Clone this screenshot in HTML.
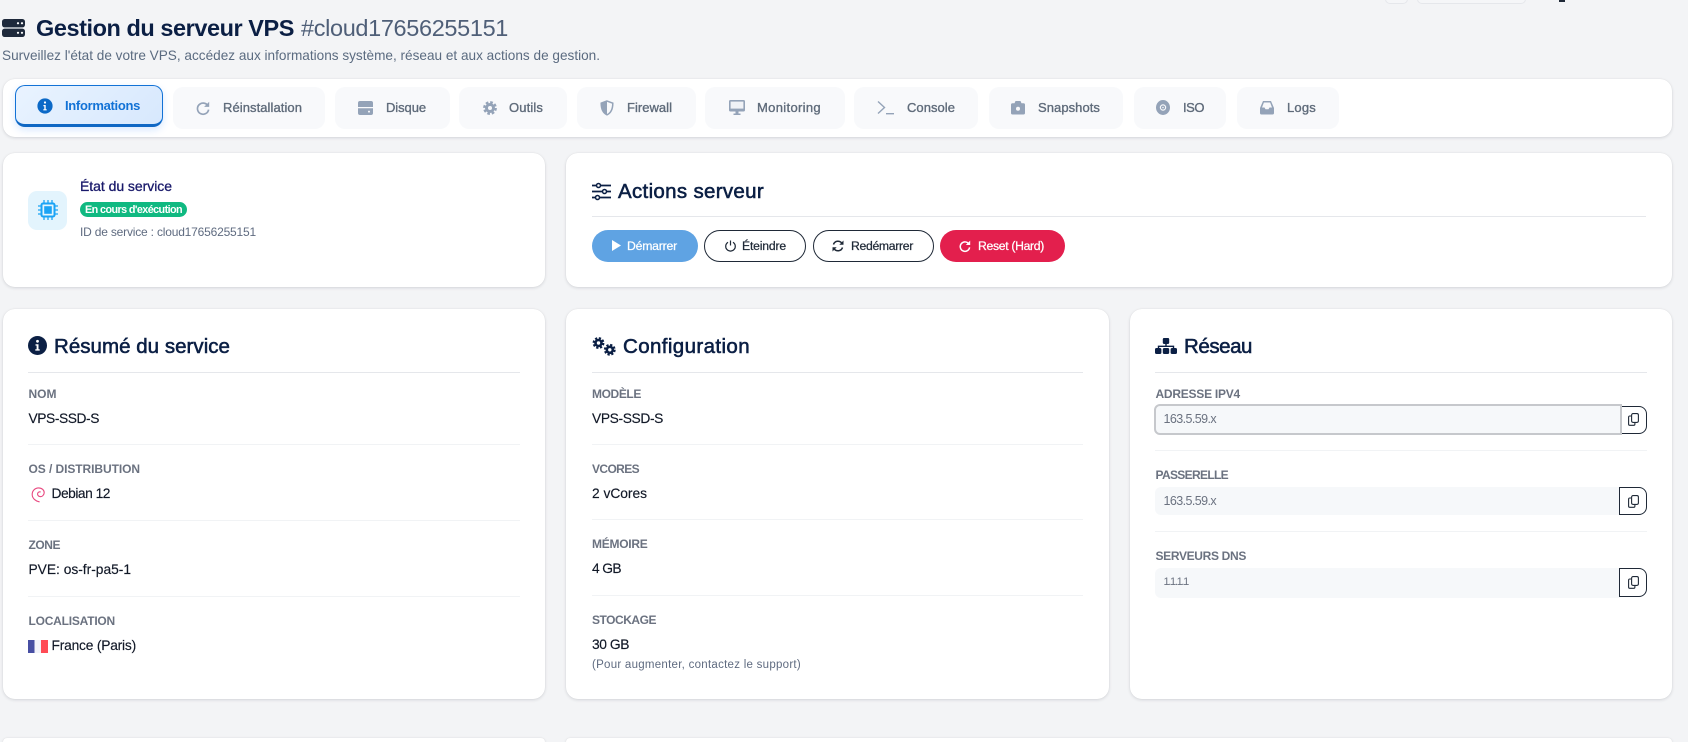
<!DOCTYPE html>
<html lang="fr">
<head>
<meta charset="utf-8">
<title>Gestion du serveur VPS</title>
<style>
html,body{margin:0;padding:0;width:1688px;height:742px;overflow:hidden;background:#f3f4f6}
body{position:relative;font-family:"Liberation Sans",Arial,sans-serif;color:#0f172a}
#w{position:absolute;left:0;top:0;width:1688px;height:742px;overflow:hidden;filter:blur(.3px)}
.c{position:absolute;background:#fff;border-radius:12px;box-shadow:0 1px 3px rgba(15,23,42,.13),0 0 1px rgba(15,23,42,.12)}
.t{position:absolute;white-space:nowrap;line-height:20px;height:20px}
.h1{font-size:23.5px;font-weight:700;color:#0b1f44}
.h2{font-size:20.5px;color:#0b1f44;-webkit-text-stroke:.55px #0b1f44}
.tab{position:absolute;top:87px;height:42px;background:#f8f9fb;border-radius:10px}
.tl{font-size:13px;color:#5f6b7a;-webkit-text-stroke:.35px #5f6b7a}
.lb{font-size:12px;font-weight:700;color:#6b7280}
.v{font-size:13.8px;color:#111827;-webkit-text-stroke:.15px #111827}
.hr{position:absolute;height:1px;background:#e5e7eb}
.hl{position:absolute;height:1px;background:#f1f3f5}
.btn{position:absolute;top:230px;height:32px;border-radius:16px;box-sizing:border-box}
.bo{border:1px solid #1f2937;background:#fff}
.bl{font-size:12.2px;-webkit-text-stroke:.25px currentColor}
svg{position:absolute;display:block;overflow:visible}
.inp{position:absolute;background:#f6f8fa;border-radius:6px 0 0 6px;box-sizing:border-box}
.cp{position:absolute;background:#fff;box-sizing:border-box;border:1px solid #1f2937;border-radius:0 8px 8px 0}
.ip{font-size:12.5px;color:#6b7280}
</style>
</head>
<body>
<div id="w">
<!-- top clipped controls -->
<div style="position:absolute;left:1385px;top:-10px;width:23px;height:14px;border:1px solid #e5e7eb;border-radius:5px;box-sizing:border-box;background:#f5f6f8"></div>
<div style="position:absolute;left:1417px;top:-10px;width:109px;height:14px;border:1px solid #e5e7eb;border-radius:5px;box-sizing:border-box;background:#f5f6f8"></div>
<div style="position:absolute;left:1559px;top:0;width:6px;height:2px;background:#1f2937"></div>

<!-- Header -->
<svg style="left:2px;top:19px" width="23" height="18" viewBox="0 0 23 18"><rect x="0" y="0" width="23" height="8.4" rx="2.6" fill="#1e293b"/><rect x="0" y="9.6" width="23" height="8.4" rx="2.6" fill="#1e293b"/><circle cx="16" cy="4.2" r="1.1" fill="#fff"/><circle cx="20" cy="4.2" r="1.1" fill="#fff"/><circle cx="16" cy="13.8" r="1.1" fill="#fff"/><circle cx="20" cy="13.8" r="1.1" fill="#fff"/></svg>
<div class="t h1" data-w="258" style="left:36px;top:18px">Gestion du serveur VPS</div>
<div class="t" data-w="207" style="left:301px;top:18px;font-size:23.5px;color:#4f5f78">#cloud17656255151</div>
<div class="t" data-w="598" style="left:2px;top:46px;font-size:13.6px;color:#5b6b80">Surveillez l'état de votre VPS, accédez aux informations système, réseau et aux actions de gestion.</div>

<!-- Tabs -->
<div class="c" style="left:3px;top:79px;width:1669px;height:58px"></div>
<div style="position:absolute;left:15px;top:85px;width:148px;height:42px;box-sizing:border-box;border:1px solid #1272d6;border-bottom:3px solid #0f67c4;border-radius:10px;background:linear-gradient(135deg,#e9f3ff,#d7e8fd);box-shadow:0 3px 8px rgba(13,110,253,.16)"></div>
<svg style="left:37px;top:98px" width="16" height="16" viewBox="0 0 16 16"><circle cx="8" cy="8" r="7.6" fill="#0b69c7"/><circle cx="8" cy="4.5" r="1.1" fill="#fff"/><path d="M6.4 7h2.3v4.2h1v1.2H6.3v-1.2h1V8.2h-.9z" fill="#fff"/></svg>
<div class="t" data-w="75" style="left:65px;top:96px;font-size:13px;color:#1272d6;font-weight:700">Informations</div>

<div class="tab" style="left:173px;width:152px"></div>
<svg style="left:196px;top:101px" width="14" height="14" viewBox="0 0 14 14"><path d="M12 5A5.6 5.6 0 1 0 12.6 8.6" fill="none" stroke="#94a3b8" stroke-width="1.7"/><path d="M13.2.8v5.1H8.1z" fill="#94a3b8"/></svg>
<div class="t tl" data-w="79" style="left:223px;top:98px">Réinstallation</div>

<div class="tab" style="left:335px;width:115px"></div>
<svg style="left:358px;top:101px" width="15" height="14" viewBox="0 0 15 14"><path d="M2 0h11a2 2 0 0 1 2 2v4H0V2a2 2 0 0 1 2-2z" fill="#94a3b8"/><path d="M0 7.2h15V12a2 2 0 0 1-2 2H2a2 2 0 0 1-2-2z" fill="#94a3b8"/><circle cx="11" cy="10.6" r="1" fill="#f8f9fb"/></svg>
<div class="t tl" data-w="40" style="left:386px;top:98px">Disque</div>

<div class="tab" style="left:459px;width:108px"></div>
<svg style="left:483px;top:101px" width="14" height="14" viewBox="0 0 14 14"><circle cx="7" cy="7" r="5.6" fill="none" stroke="#94a3b8" stroke-width="2.6" stroke-dasharray="2.6 1.8"/><circle cx="7" cy="7" r="5" fill="#94a3b8"/><circle cx="7" cy="7" r="2" fill="#f8f9fb"/></svg>
<div class="t tl" data-w="34" style="left:509px;top:98px">Outils</div>

<div class="tab" style="left:577px;width:119px"></div>
<svg style="left:600px;top:100px" width="14" height="16" viewBox="0 0 14 16"><path d="M7 1 1.2 3.2c0 5 1 9.300 5.800 11.600 4.800-2.300 5.800-6.600 5.800-11.600z" fill="none" stroke="#94a3b8" stroke-width="1.500"/><path d="M7 1 1.200 3.200c0 5 1 9.300 5.800 11.600z" fill="#94a3b8"/></svg>
<div class="t tl" data-w="45" style="left:627px;top:98px">Firewall</div>

<div class="tab" style="left:705px;width:140px"></div>
<svg style="left:729px;top:100px" width="16" height="15" viewBox="0 0 16 15"><path d="M1.500 0h13A1.500 1.500 0 0 1 16 1.500v8.500a1.500 1.500 0 0 1-1.500 1.500h-13A1.500 1.500 0 0 1 0 10V1.500A1.500 1.500 0 0 1 1.500 0z" fill="#94a3b8"/><rect x="1.600" y="1.600" width="12.800" height="7" fill="#f0f2f6"/><path d="M6.500 11.500h3v2h2v1.500h-7v-1.500h2z" fill="#94a3b8"/></svg>
<div class="t tl" data-w="64" style="left:757px;top:98px">Monitoring</div>

<div class="tab" style="left:854px;width:124px"></div>
<svg style="left:877px;top:100px" width="17" height="15" viewBox="0 0 17 15"><path d="M1 1.500 7.500 7.500 1 13.500" fill="none" stroke="#94a3b8" stroke-width="1.400"/><rect x="9" y="13" width="8" height="1.400" fill="#94a3b8"/></svg>
<div class="t tl" data-w="48" style="left:907px;top:98px">Console</div>

<div class="tab" style="left:989px;width:134px"></div>
<svg style="left:1011px;top:100px" width="14" height="15" viewBox="0 0 14 15"><path d="M4.500 1h5l1 2.300H12.500a1.500 1.500 0 0 1 1.500 1.500V13a1.500 1.500 0 0 1-1.500 1.500h-11A1.500 1.500 0 0 1 0 13V4.800a1.500 1.500 0 0 1 1.500-1.500H3.500z" fill="#94a3b8"/><circle cx="7" cy="8.800" r="2" fill="#f8f9fb"/></svg>
<div class="t tl" data-w="62" style="left:1038px;top:98px">Snapshots</div>

<div class="tab" style="left:1134px;width:92px"></div>
<svg style="left:1156px;top:100px" width="14" height="15" viewBox="0 0 14 15"><ellipse cx="7" cy="7.500" rx="7" ry="7.500" fill="#94a3b8"/><circle cx="7" cy="7.500" r="2.600" fill="none" stroke="#f8f9fb" stroke-width="1.200"/><circle cx="7" cy="7.500" r=".8" fill="#f8f9fb"/></svg>
<div class="t tl" data-w="21" style="left:1183px;top:98px">ISO</div>

<div class="tab" style="left:1237px;width:102px"></div>
<svg style="left:1260px;top:100px" width="14" height="15" viewBox="0 0 14 15"><path d="M3 1h8l3 7V13a1.500 1.500 0 0 1-1.500 1.500h-11A1.500 1.500 0 0 1 0 13V8z" fill="#94a3b8"/><path d="M3.900 2.500h6.200l1.900 5H9.500l-1 1.800h-3l-1-1.800H2z" fill="#f8f9fb"/></svg>
<div class="t tl" data-w="29" style="left:1287px;top:98px">Logs</div>

<!-- Service state -->
<div class="c" style="left:3px;top:153px;width:542px;height:134px"></div>
<div style="position:absolute;left:28px;top:191px;width:39px;height:39px;border-radius:9px;background:#e3f4fd"></div>
<svg style="left:38px;top:200px" width="20" height="20" viewBox="0 0 20 20"><rect x="3.500" y="3.500" width="13" height="13" rx="1.500" fill="none" stroke="#1aa3f5" stroke-width="2"/><rect x="6.200" y="6.200" width="7.600" height="7.600" fill="#1aa3f5"/><path d="M6 0v3M10 0v3M14 0v3M6 17v3M10 17v3M14 17v3M0 6h3M0 10h3M0 14h3M17 6h3M17 10h3M17 14h3" stroke="#1aa3f5" stroke-width="1.300"/></svg>
<div class="t" data-w="92" style="left:80px;top:176px;font-size:14px;color:#1a1a6b;-webkit-text-stroke:.3px #1a1a6b">État du service</div>
<div style="position:absolute;left:80px;top:202px;width:107px;height:15px;border-radius:8px;background:#10b981"></div>
<div class="t" data-w="97" style="left:85px;top:199.500px;font-size:10.800px;font-weight:700;color:#fff">En cours d'exécution</div>
<div class="t" data-w="176" style="left:80px;top:222px;font-size:12px;color:#5f6b80">ID de service : cloud17656255151</div>

<!-- Actions -->
<div class="c" style="left:566px;top:153px;width:1106px;height:134px"></div>
<svg style="left:592px;top:183px" width="19" height="17" viewBox="0 0 19 17"><path d="M0 2.500h19M0 8.500h19M0 14.500h19" stroke="#0b1f44" stroke-width="1.700"/><circle cx="6.500" cy="2.500" r="2" fill="#fff" stroke="#0b1f44" stroke-width="1.500"/><circle cx="12.500" cy="8.500" r="2" fill="#fff" stroke="#0b1f44" stroke-width="1.500"/><circle cx="5.500" cy="14.500" r="2" fill="#fff" stroke="#0b1f44" stroke-width="1.500"/></svg>
<div class="t h2" data-w="146" style="left:618px;top:182px">Actions serveur</div>
<div class="hr" style="left:592px;top:216px;width:1054px"></div>

<div class="btn" style="left:592px;width:106px;background:#5fa3e3"></div>
<svg style="left:612px;top:240px" width="9" height="11" viewBox="0 0 9 11"><path d="M0 0 9 5.500 0 11z" fill="#fff"/></svg>
<div class="t bl" data-w="50" style="left:627px;top:236px;color:#fff">Démarrer</div>

<div class="btn bo" style="left:704px;width:102px"></div>
<svg style="left:725px;top:240px" width="11" height="12" viewBox="0 0 11 12"><path d="M3 2.200a4.800 4.800 0 1 0 5 0" fill="none" stroke="#1f2937" stroke-width="1.200"/><path d="M5.500 .5v5" stroke="#1f2937" stroke-width="1.200"/></svg>
<div class="t bl" data-w="44" style="left:742px;top:236px;color:#1f2937">Éteindre</div>

<div class="btn bo" style="left:813px;width:121px"></div>
<svg style="left:832px;top:240px" width="12" height="12" viewBox="0 0 12 12"><path d="M1.500 4.500A4.700 4.700 0 0 1 9.800 3.200M10.500 7.500A4.700 4.700 0 0 1 2.200 8.800" fill="none" stroke="#1f2937" stroke-width="1.500"/><path d="M11.500 .5v4.200H7.300zM.5 11.500V7.300h4.200z" fill="#1f2937"/></svg>
<div class="t bl" data-w="62" style="left:851px;top:236px;color:#1f2937">Redémarrer</div>

<div class="btn" style="left:940px;width:125px;background:#e31f4d"></div>
<svg style="left:959px;top:240px" width="12" height="12" viewBox="0 0 12 12"><path d="M10 4.200A4.700 4.700 0 1 0 10.600 7.400" fill="none" stroke="#fff" stroke-width="1.500"/><path d="M11.200 .6v4.400H6.800z" fill="#fff"/></svg>
<div class="t bl" data-w="66" style="left:978px;top:236px;color:#fff">Reset (Hard)</div>

<!-- Résumé -->
<div class="c" style="left:3px;top:309px;width:542px;height:390px"></div>
<svg style="left:28px;top:336px" width="19" height="19" viewBox="0 0 19 19"><circle cx="9.500" cy="9.500" r="9.500" fill="#0b1f44"/><circle cx="9.500" cy="5.300" r="1.400" fill="#fff"/><path d="M7.500 8.200h3v5h1.200v1.400H7.300v-1.400h1.300V9.600H7.500z" fill="#fff"/></svg>
<div class="t h2" data-w="176" style="left:54px;top:337px">Résumé du service</div>
<div class="hr" style="left:28px;top:372px;width:492px"></div>

<div class="t lb" data-w="28" style="left:28.500px;top:384px">NOM</div>
<div class="t v" data-w="70.500" style="left:28.500px;top:409px">VPS-SSD-S</div>
<div class="hl" style="left:28px;top:444px;width:492px"></div>
<div class="t lb" data-w="111.500" style="left:28.500px;top:459px">OS / DISTRIBUTION</div>
<svg style="left:31px;top:487px" width="14" height="16" viewBox="0 0 14 16"><path d="M8.200 14.800C4.500 14 1.500 11.500 1.200 8 .9 4 3.800 1 7.500 .9c3.300-.1 5.800 2.200 5.700 4.800-.1 2.600-2.300 4.200-4.200 3.900-1.700-.3-2.700-1.600-2.400-3 .2-1.200 1.500-2 2.700-1.700" fill="none" stroke="#e8477f" stroke-width="1.100" stroke-linecap="round"/></svg>
<div class="t v" data-w="58.500" style="left:51.500px;top:484px">Debian 12</div>
<div class="hl" style="left:28px;top:520px;width:492px"></div>
<div class="t lb" data-w="31.500" style="left:28.500px;top:535px">ZONE</div>
<div class="t v" data-w="102.500" style="left:28.500px;top:560px">PVE: os-fr-pa5-1</div>
<div class="hl" style="left:28px;top:596px;width:492px"></div>
<div class="t lb" data-w="86.500" style="left:28.500px;top:611px">LOCALISATION</div>
<div style="position:absolute;left:28px;top:640px;width:20px;height:13px;background:linear-gradient(90deg,#474fa3 0 33%,#f2f3fa 33% 66%,#ff4b55 66%)"></div>
<div class="t v" data-w="84.500" style="left:51.500px;top:636px">France (Paris)</div>

<!-- Configuration -->
<div class="c" style="left:566px;top:309px;width:543px;height:390px"></div>
<svg style="left:592px;top:337px" width="24" height="19" viewBox="0 0 24 19"><circle cx="6.500" cy="6" r="4.800" fill="none" stroke="#0b1f44" stroke-width="2.200" stroke-dasharray="2.200 1.600"/><circle cx="6.500" cy="6" r="4.300" fill="#0b1f44"/><circle cx="6.500" cy="6" r="1.700" fill="#fff"/><circle cx="17.800" cy="12.800" r="4.800" fill="none" stroke="#0b1f44" stroke-width="2.200" stroke-dasharray="2.200 1.600"/><circle cx="17.800" cy="12.800" r="4.300" fill="#0b1f44"/><circle cx="17.800" cy="12.800" r="1.700" fill="#fff"/></svg>
<div class="t h2" data-w="127" style="left:623px;top:337px">Configuration</div>
<div class="hr" style="left:592px;top:372px;width:491px"></div>

<div class="t lb" data-w="49" style="left:592px;top:384px">MODÈLE</div>
<div class="t v" data-w="71" style="left:592px;top:409px">VPS-SSD-S</div>
<div class="hl" style="left:592px;top:444px;width:491px"></div>
<div class="t lb" data-w="47" style="left:592px;top:459px">VCORES</div>
<div class="t v" data-w="55" style="left:592px;top:484px">2 vCores</div>
<div class="hl" style="left:592px;top:519px;width:491px"></div>
<div class="t lb" data-w="55.500" style="left:592px;top:534px">MÉMOIRE</div>
<div class="t v" data-w="29" style="left:592px;top:559px">4 GB</div>
<div class="hl" style="left:592px;top:595px;width:491px"></div>
<div class="t lb" data-w="64" style="left:592px;top:610px">STOCKAGE</div>
<div class="t v" data-w="37" style="left:592px;top:635px">30 GB</div>
<div class="t" data-w="209" style="left:592px;top:655px;font-size:11.500px;color:#5f6b80">(Pour augmenter, contactez le support)</div>

<!-- Réseau -->
<div class="c" style="left:1130px;top:309px;width:542px;height:390px"></div>
<svg style="left:1155px;top:338px" width="22" height="16" viewBox="0 0 22 16"><rect x="7.800" y="0" width="6.400" height="6" rx="1.200" fill="#0b1f44"/><path d="M11 6v2.800M3.500 10.500V8.300h15v2.200" fill="none" stroke="#0b1f44" stroke-width="1.400"/><rect x="0" y="10" width="6.400" height="6" rx="1.500" fill="#0b1f44"/><rect x="7.800" y="10" width="6.400" height="6" rx="1.500" fill="#0b1f44"/><rect x="15.600" y="10" width="6.400" height="6" rx="1.500" fill="#0b1f44"/></svg>
<div class="t h2" data-w="68" style="left:1184px;top:337px">Réseau</div>
<div class="hr" style="left:1155px;top:372px;width:492px"></div>

<div class="t lb" data-w="84.500" style="left:1155.500px;top:384px">ADRESSE IPV4</div>
<div class="cp" style="left:1620px;top:406px;width:27px;height:28px"></div>
<div class="inp" style="left:1154px;top:404px;width:468px;height:31px;border:2px solid #c6c8cc;border-right-width:2px"></div>
<div class="t ip" data-w="52.500" style="left:1163.500px;top:409px">163.5.59.x</div>
<svg style="left:1628px;top:413px" width="11" height="13" viewBox="0 0 11 13"><rect x="3.600" y=".6" width="6.800" height="8.800" rx="1.500" fill="none" stroke="#1f2937" stroke-width="1.100"/><path d="M3 3H1.800A1.200 1.200 0 0 0 .6 4.200v6.900a1.200 1.200 0 0 0 1.200 1.200h3.900a1.200 1.200 0 0 0 1.200-1.200V10" fill="none" stroke="#1f2937" stroke-width="1.100"/></svg>
<div class="hl" style="left:1155px;top:450px;width:492px"></div>

<div class="t lb" data-w="72.500" style="left:1155.500px;top:465px">PASSERELLE</div>
<div class="inp" style="left:1155px;top:487px;width:465px;height:28px"></div>
<div class="cp" style="left:1619px;top:487px;width:28px;height:28px"></div>
<div class="t ip" data-w="52.500" style="left:1163.500px;top:491px">163.5.59.x</div>
<svg style="left:1628px;top:495px" width="11" height="13" viewBox="0 0 11 13"><rect x="3.600" y=".6" width="6.800" height="8.800" rx="1.500" fill="none" stroke="#1f2937" stroke-width="1.100"/><path d="M3 3H1.800A1.200 1.200 0 0 0 .6 4.200v6.900a1.200 1.200 0 0 0 1.200 1.200h3.900a1.200 1.200 0 0 0 1.200-1.200V10" fill="none" stroke="#1f2937" stroke-width="1.100"/></svg>
<div class="hl" style="left:1155px;top:531px;width:492px"></div>

<div class="t lb" data-w="90.500" style="left:1155.500px;top:546px">SERVEURS DNS</div>
<div class="inp" style="left:1155px;top:568px;width:465px;height:30px"></div>
<div class="cp" style="left:1619px;top:568px;width:28px;height:29px"></div>
<div class="t ip" data-w="24.500" style="left:1163.500px;top:572px;font-size:11px">1.1.1.1</div>
<svg style="left:1628px;top:576px" width="11" height="13" viewBox="0 0 11 13"><rect x="3.600" y=".6" width="6.800" height="8.800" rx="1.500" fill="none" stroke="#1f2937" stroke-width="1.100"/><path d="M3 3H1.800A1.200 1.200 0 0 0 .6 4.200v6.900a1.200 1.200 0 0 0 1.200 1.200h3.900a1.200 1.200 0 0 0 1.200-1.200V10" fill="none" stroke="#1f2937" stroke-width="1.100"/></svg>

<!-- Next row -->
<div class="c" style="left:3px;top:738px;width:542px;height:4px;border-radius:12px 12px 0 0"></div>
<div class="c" style="left:566px;top:738px;width:1106px;height:4px;border-radius:12px 12px 0 0"></div>
</div>

<script>
document.querySelectorAll('[data-w]').forEach(function(e){
  var w=parseFloat(e.getAttribute('data-w')),n=e.getBoundingClientRect().width,l=e.textContent.length;
  e.style.letterSpacing=((w-n)/l).toFixed(3)+'px';
});
</script>
</body>
</html>
